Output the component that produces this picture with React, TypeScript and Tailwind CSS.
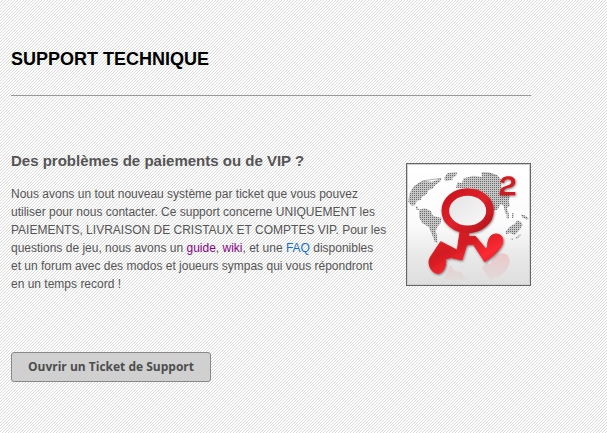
const links = {
  guide: "#guide",
  wiki: "#wiki",
  faq: "#faq",
};

const Logo = () => (
  <svg
    viewBox="21 27 369 363"
    className="block h-auto w-full"
    role="img"
    aria-label="Support"
  >
    <defs>
      <linearGradient id="card" x1="0" y1="0" x2="0" y2="1">
        <stop offset="0" stopColor="#ffffff" />
        <stop offset="0.5" stopColor="#fbfbfb" />
        <stop offset="0.75" stopColor="#e9e9e9" />
        <stop offset="1" stopColor="#dedede" />
      </linearGradient>
      <linearGradient id="face" x1="0" y1="0" x2="1" y2="1">
        <stop offset="0" stopColor="#e2e2e2" />
        <stop offset="1" stopColor="#fafafa" />
      </linearGradient>
      <linearGradient id="ring" x1="0" y1="0" x2="1" y2="1">
        <stop offset="0" stopColor="#c8141c" />
        <stop offset="0.5" stopColor="#e0222a" />
        <stop offset="1" stopColor="#b5141b" />
      </linearGradient>
      <linearGradient id="leg" x1="0" y1="0" x2="1" y2="1">
        <stop offset="0" stopColor="#f0242c" />
        <stop offset="0.35" stopColor="#d01a21" />
        <stop offset="0.65" stopColor="#fb2a32" />
        <stop offset="1" stopColor="#d81c24" />
      </linearGradient>
      <linearGradient id="fade" x1="0" y1="290" x2="0" y2="385" gradientUnits="userSpaceOnUse">
        <stop offset="0" stopColor="#ef5a60" stopOpacity="0.25" />
        <stop offset="1" stopColor="#ef5a60" stopOpacity="0.02" />
      </linearGradient>
      <pattern id="dots" width="6" height="6" patternUnits="userSpaceOnUse">
        <rect width="6" height="6" fill="#c6c6c6" />
        <rect width="3" height="3" fill="#6a6a6a" />
      </pattern>
      <filter id="shadow" x="-20%" y="-20%" width="140%" height="140%">
        <feDropShadow dx="2" dy="3" stdDeviation="2.5" floodColor="#000000" floodOpacity="0.5" />
      </filter>
    </defs>

    <rect x="21" y="27" width="369" height="363" fill="url(#card)" />
    <rect x="22.5" y="28.5" width="366" height="360" fill="none" stroke="#d0d0d0" strokeWidth="3" />

    {/* world map */}
    <g fill="url(#dots)">
      <path d="M25 140L28 118L36 102L43 92L60 82L68 78L96 80L118 72L124 70L120 80L104 92L98 101L86 104L80 118L66 126L63 134L50 138L46 150L34 152Z" />
      <path d="M133 68L142 54L172 51L168 63L156 69L158 75L135 78Z" />
      <path d="M47 153L53 155L57 165L50 165Z" />
      <path d="M57 164L74 160L92 167L99 182L124 189L122 204L112 216L107 228L111 242L112 264L104 260L95 236L86 216L66 204L57 187Z" />
      <path d="M168 100L172 82L186 84L190 70L220 62L246 66L244 52L266 52L292 60L302 72L306 106L318 112L330 122L326 138L330 152L320 160L326 174L316 176L311 152L302 148L292 164L281 166L276 140L250 112L212 98Z" />
      <path d="M320 172L326 174L327 191L320 190ZM337 174L342 174L340 190L336 188Z" />
      <path d="M362 179L372 180L386 190L382 194L368 188Z" />
      <path d="M317 230L328 216L344 206L352 196L364 202L368 210L358 226L344 240L330 234L318 238Z" />
      <path d="M330 252L340 249L338 254ZM346 250L362 236L361 242L350 252Z" />
    </g>
    <path d="M40 99L70 77L124 70M250 54L290 62" fill="none" stroke="#8a8a8a" strokeWidth="2" />

    {/* reflection */}
    <path
      d="M132 372L150 330L164 348L184 352L198 376ZM246 338L262 322L270 330C282 296 306 288 322 300C338 318 324 346 302 362L270 376Z"
      fill="url(#fade)"
    />

    {/* character */}
    <g filter="url(#shadow)">
      <path
        d="M180 230L206 232L205 244L226 244L257 281L263 276C262 252 272 237 289 237C306 238 312 252 307 267C299 286 278 306 254 320L220 268L200 270L186 315L154 308L137 311C139 328 134 350 118 355C100 357 87 340 87 320C89 304 99 297 104 287L122 260L172 286Z"
        fill="url(#leg)"
        stroke="url(#leg)"
        strokeWidth="3"
        strokeLinejoin="round"
      />
      <ellipse cx="203" cy="167" rx="67" ry="56" fill="url(#face)" stroke="url(#ring)" strokeWidth="23" />
      <path
        d="M301 82C303 70 312 64 324 64C338 64 346 70 346 80C346 92 336 97 323 100C316 102 312 105 311 111H346V121H299C298 105 304 98 316 94C328 90 334 87 334 81C334 76 330 73 323 73C317 73 313 77 312 84Z"
        fill="#cf1c23"
      />
    </g>
  </svg>
);

const App = () => {
  return (
    <main className="min-h-screen bg-white bg-[linear-gradient(135deg,#ffffff_42%,#d9d9d9_42%_58%,#ffffff_58%)] bg-size-[3px_3px] px-[11px] py-12 font-['Liberation_Sans',Arial,sans-serif] text-[#555555]">
      <div className="max-w-[520px]">
        <h1 className="border-b border-[#999999] pb-[25px] text-lg leading-[22px] font-bold text-black">
          SUPPORT TECHNIQUE
        </h1>

        <section className="mt-14 flex items-start gap-4">
          <div className="min-w-0 flex-1">
            <h2 className="text-[15px] leading-[18px] font-bold">
              Des problèmes de paiements ou de VIP ?
            </h2>
            <p className="mt-[15px] text-xs leading-[18px]">
              Nous avons un tout nouveau système par ticket que vous pouvez
              utiliser pour nous contacter. Ce support concerne UNIQUEMENT les
              PAIEMENTS, LIVRAISON DE CRISTAUX ET COMPTES VIP. Pour les
              questions de jeu, nous avons un{" "}
              <a href={links.guide} className="text-[#8b008b]">guide</a>,{" "}
              <a href={links.wiki} className="text-[#8b008b]">wiki</a>, et une{" "}
              <a href={links.faq} className="text-[#0f6fd0]">FAQ</a> disponibles
              et&nbsp;un forum avec des modos et joueurs sympas qui vous
              répondront en&nbsp;un temps record !
            </p>
          </div>
          <div className="mt-[11px] w-[125px] shrink-0 border border-[#666666]">
            <Logo />
          </div>
        </section>

        <button
          type="button"
          className="mt-[59px] h-[30px] w-[200px] rounded-[3px] border border-[#888888] bg-[#d0d0d0] font-['Open_Sans','Noto_Sans',sans-serif] text-xs font-bold text-[#4d4d4d]"
        >
          Ouvrir un Ticket de Support
        </button>
      </div>
    </main>
  );
};

export default App;
